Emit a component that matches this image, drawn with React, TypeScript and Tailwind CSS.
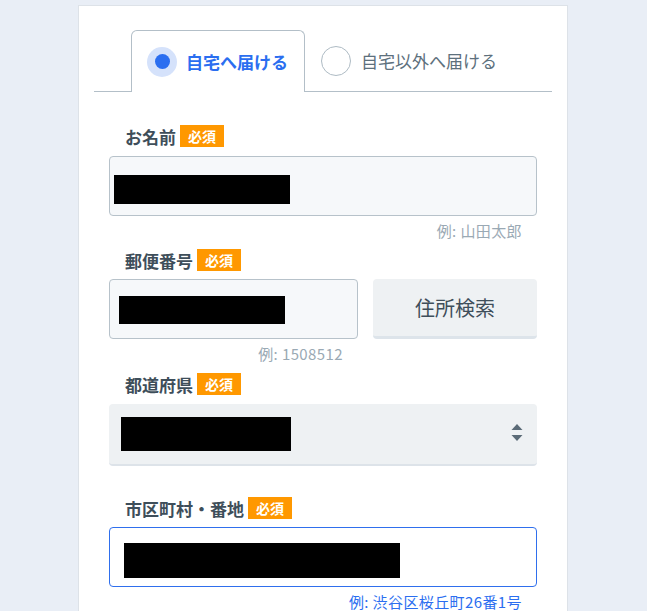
import React from "react";

const font = { fontFamily: '"Noto Sans CJK JP", "Noto Sans", sans-serif' };

function Badge() {
  return (
    <span className="inline-flex h-[22px] items-center bg-[#ff9800] px-[8px] text-[14px] font-bold leading-none text-white">
      必須
    </span>
  );
}

function Label({ text }: { text: string }) {
  return (
    <div className="flex items-center gap-[4px] pl-4">
      <span className="text-[17px] font-bold leading-none text-[#3e4e5a]">{text}</span>
      <Badge />
    </div>
  );
}

function Hint({ text, blue }: { text: string; blue?: boolean }) {
  return (
    <div
      className={`mt-[5px] pr-[15px] text-right text-[15px] leading-[20px] tracking-[0.4px] ${
        blue ? "text-[#2b6ef0]" : "text-[#9aa9b4]"
      }`}
    >
      {text}
    </div>
  );
}

export default function App() {
  return (
    <div style={font} className="min-h-screen bg-[#e9eef6] pt-[5px]">
      <div className="ml-[78px] w-[490px] border border-[#dde2e8] bg-white px-[15px] pb-16 pt-[24px]">
        {/* Tabs */}
        <div className="flex h-[62px] border-b border-[#b3bfc8] pl-[37px]">
          <div className="-mb-px flex w-[174px] items-center gap-[9px] rounded-t-[6px] border border-b-0 border-[#b3bfc8] bg-white pl-[15px]">
            <span className="flex h-[30px] w-[30px] items-center justify-center rounded-full bg-[#d5e2fb]">
              <span className="h-[15px] w-[15px] rounded-full bg-[#2b6ef0]" />
            </span>
            <span className="text-[17px] font-bold text-[#2b6ef0]">自宅へ届ける</span>
          </div>
          <div className="flex items-center gap-[10px] pl-[16px]">
            <span className="h-[30px] w-[30px] rounded-full border border-[#aebbc4] bg-white" />
            <span className="text-[17px] text-[#5d707d]">自宅以外へ届ける</span>
          </div>
        </div>

        {/* Form */}
        <div className="px-[15px]">
          {/* Name */}
          <div className="mt-[33px]">
            <Label text="お名前" />
            <div className="mt-[9px] h-[60px] rounded-[4px] border border-[#b7c2ca] bg-[#f6f8fa] pl-[4px] pt-[18px]">
              <div className="h-[29px] w-[176px] bg-black" />
            </div>
            <Hint text="例: 山田太郎" />
          </div>

          {/* Postal */}
          <div className="mt-[8px]">
            <Label text="郵便番号" />
            <div className="mt-[8px] flex gap-[15px]">
              <div className="w-[249px]">
                <div className="h-[60px] rounded-[4px] border border-[#b7c2ca] bg-[#f6f8fa] pl-[9px] pt-[16px]">
                  <div className="h-[28px] w-[166px] bg-black" />
                </div>
                <Hint text="例: 1508512" />
              </div>
              <button className="flex h-[60px] flex-1 items-center justify-center rounded-[4px] border-b-[3px] border-[#dde4ea] bg-[#eef1f3] text-[20px] text-[#3e4e5a]">
                住所検索
              </button>
            </div>
          </div>

          {/* Prefecture */}
          <div className="mt-[9px]">
            <Label text="都道府県" />
            <div className="mt-[9px] flex h-[62px] items-center justify-between rounded-[4px] border-b-[2px] border-[#dde3e9] bg-[#eef1f3] pl-[12px] pr-[14px]">
              <div className="h-[34px] w-[170px] bg-black" />
              <svg width="12" height="20" viewBox="0 0 12 20" className="mb-[2px]">
                <polygon points="6,1 11.5,7 0.5,7" fill="#5b6b77" />
                <polygon points="0.5,12 11.5,12 6,18" fill="#5b6b77" />
              </svg>
            </div>
          </div>

          {/* City */}
          <div className="mt-[31px]">
            <Label text="市区町村・番地" />
            <div className="mt-[8px] h-[60px] rounded-[4px] border border-[#2f6fed] bg-white pl-[14px] pt-[15px]">
              <div className="h-[35px] w-[276px] bg-black" />
            </div>
            <div className="mt-[5px] pr-[15px] text-right text-[15px] leading-[20px] tracking-[0.4px] text-[#2b6ef0]">
              例: 渋谷区桜丘町26番1号
            </div>
          </div>
        </div>
      </div>
    </div>
  );
}
